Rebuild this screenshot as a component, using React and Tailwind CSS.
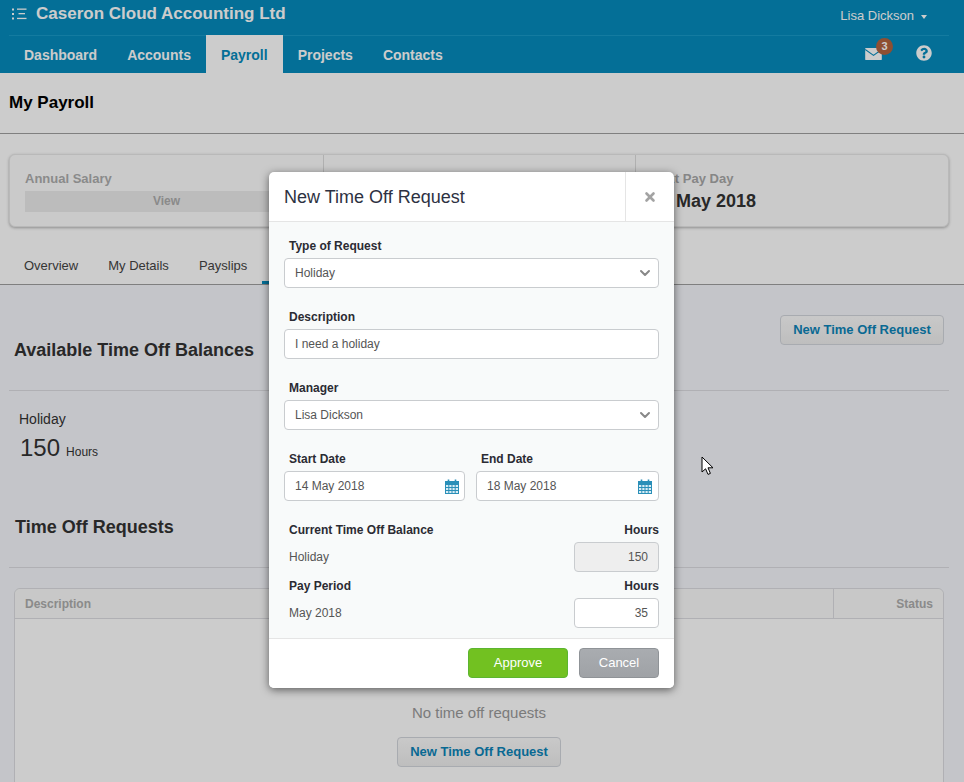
import { ChevronDown, X } from "lucide-react";
import { FaQuestionCircle } from "react-icons/fa";

const navItems = ["Dashboard", "Accounts", "Payroll", "Projects", "Contacts"];
const tabs = ["Overview", "My Details", "Payslips"];

function MenuIcon() {
  return (
    <svg width="15" height="12" viewBox="0 0 15 12" fill="#fff">
      <rect x="0" y="0.5" width="2" height="2" />
      <rect x="0" y="5" width="2" height="2" />
      <rect x="0" y="9.5" width="2" height="2" />
      <rect x="5" y="0.5" width="9.5" height="1.3" />
      <rect x="6.5" y="5" width="6.5" height="1.3" />
      <rect x="5" y="9.8" width="9.5" height="1.3" />
    </svg>
  );
}

function MailIcon() {
  return (
    <svg width="17" height="12" viewBox="0 0 18 13">
      <rect x="0" y="0" width="18" height="13" rx="0.5" fill="#fff" />
      <path d="M0 1.5 L9 8 L18 1.5" fill="none" stroke="#058bbd" strokeWidth="1.2" />
    </svg>
  );
}

function CalendarIcon() {
  return (
    <svg width="14" height="15" viewBox="0 0 14 15" fill="none" stroke="#2a8fb8" strokeWidth="1">
      <rect x="0.5" y="2.5" width="13" height="12" fill="#d9edf5" />
      <rect x="0.5" y="2.5" width="13" height="3" fill="#2a8fb8" />
      <path d="M0.5 8.5H13.5M0.5 11.5H13.5M3.8 5.5V14.5M7 5.5V14.5M10.2 5.5V14.5" />
      <path d="M3.5 0.5V3.5M10.5 0.5V3.5" strokeWidth="1.6" />
    </svg>
  );
}

function Cursor() {
  return (
    <svg className="absolute left-[701px] top-[456px] z-30" width="14" height="20" viewBox="0 0 14 20">
      <path d="M1 1 V16 L4.6 12.8 L7 18.4 L9.4 17.4 L7 11.8 H12 Z" fill="#fff" stroke="#000" strokeWidth="1" />
    </svg>
  );
}

function OutlineButton({ className = "" }) {
  return (
    <button className={`h-[30px] w-[164px] rounded-[4px] border border-[#d3d6dc] bg-gradient-to-b from-[#fbfbfb] to-[#eeeeee] text-[13px] font-bold text-[#0c84b8] ${className}`}>
      New Time Off Request
    </button>
  );
}

function SelectField({ value }) {
  return (
    <div className="flex h-[30px] items-center justify-between rounded-[4px] border border-[#c9cccf] bg-white pl-[10px] pr-[5px] text-[12px] text-[#555]">
      <span>{value}</span>
      <ChevronDown size={16} strokeWidth={3} className="text-[#888]" />
    </div>
  );
}

function DateField({ value, className = "" }) {
  return (
    <div className={`flex h-[30px] items-center justify-between rounded-[4px] border border-[#c9cccf] bg-white pl-[10px] text-[12px] text-[#555] ${className}`}>
      <span>{value}</span>
      <CalendarIcon />
    </div>
  );
}

function FieldLabel({ children }) {
  return <label className="mb-[4px] block h-[16px] pl-[5px] text-[12px] font-bold leading-[16px] text-[#2b2b33]">{children}</label>;
}

function TimeOffModal() {
  return (
    <div className="absolute left-[269px] top-[172px] z-20 w-[405px] overflow-hidden rounded-[5px] bg-white shadow-[0_2px_8px_rgba(0,0,0,0.55)]">
      <div className="flex h-[50px] items-stretch border-b border-[#e5e5e5]">
        <h3 className="flex flex-1 items-center pl-[15px] pt-[1px] text-[18px] text-[#2d3142]">New Time Off Request</h3>
        <div className="flex w-[49px] items-center justify-center border-l border-[#e5e5e5]">
          <X size={14} strokeWidth={4.5} className="text-[#a3a3a3]" />
        </div>
      </div>

      <div className="bg-[#f8fafa] px-[15px] pb-[10px] pt-[16px]">
        <div className="mb-[21px]">
          <FieldLabel>Type of Request</FieldLabel>
          <SelectField value="Holiday" />
        </div>
        <div className="mb-[21px]">
          <FieldLabel>Description</FieldLabel>
          <div className="flex h-[30px] items-center rounded-[4px] border border-[#c9cccf] bg-white pl-[10px] text-[12px] text-[#555]">I need a holiday</div>
        </div>
        <div className="mb-[21px]">
          <FieldLabel>Manager</FieldLabel>
          <SelectField value="Lisa Dickson" />
        </div>
        <div className="mb-[21px] grid grid-cols-[181px_183px] gap-x-[11px]">
          <div>
            <FieldLabel>Start Date</FieldLabel>
            <DateField value="14 May 2018" className="pr-[5px]" />
          </div>
          <div>
            <FieldLabel>End Date</FieldLabel>
            <DateField value="18 May 2018" className="pr-[6px]" />
          </div>
        </div>

        <div className="mb-[6px]">
          <div className="mb-[4px] flex h-[16px] justify-between pl-[5px] text-[12px] font-bold leading-[16px] text-[#2b2b33]">
            <span>Current Time Off Balance</span>
            <span>Hours</span>
          </div>
          <div className="flex items-center justify-between pl-[5px] text-[12px] text-[#555]">
            <span>Holiday</span>
            <div className="flex h-[30px] w-[85px] items-center justify-end rounded-[4px] border border-[#c9cccf] bg-[#eeeeee] pr-[10px]">150</div>
          </div>
        </div>
        <div>
          <div className="mb-[4px] flex h-[16px] justify-between pl-[5px] text-[12px] font-bold leading-[16px] text-[#2b2b33]">
            <span>Pay Period</span>
            <span>Hours</span>
          </div>
          <div className="flex items-center justify-between pl-[5px] text-[12px] text-[#555]">
            <span>May 2018</span>
            <div className="flex h-[30px] w-[85px] items-center justify-end rounded-[4px] border border-[#c9cccf] bg-white pr-[10px]">35</div>
          </div>
        </div>
      </div>

      <div className="flex h-[50px] items-center justify-end gap-[11px] border-t border-[#e5e5e5] bg-white pb-[1px] pr-[15px]">
        <button className="h-[30px] w-[100px] rounded-[4px] border border-[#5cb531] bg-[#72c121] pb-[1px] text-[13px] text-white">Approve</button>
        <button className="h-[30px] w-[80px] rounded-[4px] border border-[#8f9397] bg-gradient-to-b from-[#a9acb0] to-[#9fa2a6] pb-[1px] text-[13px] text-white">Cancel</button>
      </div>
    </div>
  );
}

export default function App() {
  return (
    <div className="relative h-[782px] w-[964px] overflow-hidden bg-white font-['Liberation_Sans',Arial,sans-serif]">
      <header className="h-[73px] bg-[#058bbd] text-white">
        <div className="flex h-[35px] items-center justify-between pl-[12px] pr-[37px]">
          <div className="flex items-center gap-[9px] pb-[8px]">
            <MenuIcon />
            <span className="text-[17px] font-bold">Caseron Cloud Accounting Ltd</span>
          </div>
          <div className="flex items-center gap-[7px] pb-[3px] text-[13px]">
            <span>Lisa Dickson</span>
            <span className="mt-[1px] h-0 w-0 border-x-[3.5px] border-t-[4px] border-x-transparent border-t-white" />
          </div>
        </div>
        <div className="mx-[9px] mr-[15px] flex h-[38px] items-stretch justify-between border-t border-[#1a9ac9]">
          <nav className="-mt-[1px] flex">
            {navItems.map((item) => (
              <a
                key={item}
                className={`flex items-center px-[15px] pt-[2px] text-[14px] font-bold ${item === "Payroll" ? "bg-white text-[#058bbd]" : "text-white"}`}
              >
                {item}
              </a>
            ))}
          </nav>
          <div className="relative flex items-center pb-[4px] pr-[17px]">
            <div className="relative mr-[34px] mt-[2px] flex">
              <MailIcon />
              <span className="absolute -right-[11px] -top-[10px] flex h-[17px] w-[17px] items-center justify-center rounded-full bg-[#b2633f] text-[11px] font-bold text-white">3</span>
            </div>
            <FaQuestionCircle size={16} color="#fff" />
          </div>
        </div>
      </header>

      <div className="h-[61px] border-b border-[#9f9f9f] pl-[9px] pt-[18px] text-[17px] font-bold leading-[24px] text-black">My Payroll</div>

      <div className="mx-[15px] ml-[9px] mt-[20px] grid h-[73px] grid-cols-[314px_312px_314px] rounded-[6px] border border-[#e8e8e8] bg-[#fdfdfd] shadow-[0_1px_3px_rgba(0,0,0,0.3)]">
        <div className="border-r border-[#dddddd] pl-[15px] pr-[15px] pt-[15px]">
          <div className="text-[13px] font-bold leading-[18px] text-[#adadad]">Annual Salary</div>
          <div className="mt-[3px] flex h-[21px] items-center justify-center bg-[#ebebeb] pb-[1px] text-[12px] font-bold text-[#adadad]">View</div>
        </div>
        <div className="border-r border-[#dddddd]" />
        <div className="pl-[15px] pt-[15px]">
          <div className="text-[13px] font-bold leading-[18px] text-[#a8a8a8]">Next Pay Day</div>
          <div className="text-[18px] font-bold leading-[26px] text-[#333]">18 May 2018</div>
        </div>
      </div>

      <div className="mt-[18px] flex h-[40px] border-b border-[#9f9f9f] pl-[9px]">
        {tabs.map((tab) => (
          <a key={tab} className="flex items-center px-[15px] pt-[2px] text-[13px] text-[#444]">
            {tab}
          </a>
        ))}
        {/* active tab, its label sits behind the modal */}
        <div className="w-[88px] border-b-[3px] border-[#058bbd]" />
      </div>

      <main className="h-[497px] bg-[#f6f7fc] pl-[9px] pr-[15px] pt-[30px] text-[#333]">
        <div className="flex h-[76px] items-start justify-between border-b border-[#dcdde1]">
          <h2 className="mt-[23px] pl-[5px] text-[18px] font-bold leading-[24px]">Available Time Off Balances</h2>
          <OutlineButton className="mr-[5px]" />
        </div>
        <div className="pl-[10px] pt-[18px]">
          <div className="text-[14px] leading-[20px]">Holiday</div>
          <div className="mt-[4px] flex items-baseline gap-[6px] pl-[1px] leading-[30px]">
            <span className="text-[24px]">150</span>
            <span className="text-[12px]">Hours</span>
          </div>
        </div>
        <h2 className="mt-[48px] h-[53px] border-b border-[#dcdde1] pl-[6px] text-[18px] font-bold leading-[24px]">Time Off Requests</h2>
        <div className="ml-[5px] mr-[5px] mt-[20px] h-[300px] rounded-t-[6px] border border-[#dcdde1] bg-white">
          <div className="flex h-[30px] items-center justify-between rounded-t-[6px] border-b border-[#dcdde1] bg-[#fafbfa] text-[12px] font-bold text-[#adadad]">
            <span className="pl-[10px]">Description</span>
            <span className="flex h-full w-[110px] items-center justify-end border-l border-[#dcdde1] pr-[10px]">Status</span>
          </div>
          <div className="flex flex-col items-center pt-[82px]">
            <p className="text-[15px] leading-[24px] text-[#9a9a9a]">No time off requests</p>
            <OutlineButton className="mt-[12px]" />
          </div>
        </div>
      </main>

      <div className="absolute inset-0 z-10 bg-black/20" />
      <TimeOffModal />
      <Cursor />
    </div>
  );
}
